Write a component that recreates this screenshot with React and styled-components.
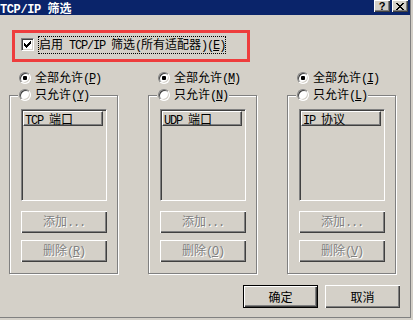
import React from 'react'
import styled, { createGlobalStyle } from 'styled-components'

const GlobalStyle = createGlobalStyle`
  html, body {
    margin: 0;
    padding: 0;
    background: #d4d0c8;
  }
  body {
    width: 413px;
    height: 320px;
    overflow: hidden;
    font-family: "Noto Sans CJK SC", "Liberation Sans", sans-serif;
    font-size: 12px;
    color: #000;
  }
`

const Window = styled.div`
  width: 410px;
  height: 317px;
  border-right: 1px solid #808080;
  border-bottom: 1px solid #808080;
  display: flex;
  flex-direction: column;
`

const TitleBar = styled.div`
  height: 15px;
  flex: none;
  background: #0a246a;
  color: #fff;
  display: flex;
  justify-content: space-between;
  align-items: flex-start;
  padding-right: 2px;
`

const TitleText = styled.div`
  font-weight: bold;
  line-height: 13px;
  padding-top: 1px;
  white-space: pre;
`

const TitleAscii = styled.span`
  font-family: "Liberation Mono", monospace;
  font-size: 12px;
  font-weight: bold;
  letter-spacing: -0.4px;
`

const Caption = styled.div`
  display: flex;
  gap: 2px;
`

const CapButton = styled.div`
  width: 16px;
  height: 12px;
  background: #d4d0c8;
  box-shadow: inset 1px 1px #fff, inset -1px -1px #404040, inset -2px -2px #808080;
  display: flex;
  align-items: center;
  justify-content: center;
  color: #000;
  font-family: "Liberation Sans", sans-serif;
  font-weight: bold;
  font-size: 11px;
  line-height: 12px;
`

const Body = styled.div`
  flex: 1;
  display: flex;
  flex-direction: column;
  padding: 15px 10px 0 9px;
`

const Highlight = styled.div`
  box-sizing: border-box;
  width: 238px;
  height: 32px;
  margin-left: 3px;
  border: 3px solid #ee3d3d;
  display: flex;
  align-items: center;
  padding: 0 0 3px 6px;
`

const CheckBox = styled.span`
  box-sizing: border-box;
  width: 13px;
  height: 13px;
  flex: none;
  background: #fff;
  border: 1px solid;
  border-color: #808080 #fff #fff #808080;
  box-shadow: inset 1px 1px #404040, inset -1px -1px #d4d0c8;
  padding: 2px 0 0 2px;
  display: flex;
`

const FocusLabel = styled.span`
  margin-left: 4px;
  border: 1px dotted #000;
  line-height: 13px;
  white-space: pre;
`

const Ascii = styled.span`
  font-family: "Liberation Mono", monospace;
  font-size: 12px;
  letter-spacing: -1.2px;
`

const Columns = styled.div`
  display: flex;
  gap: 29px;
  margin-top: 9px;
`

const Column = styled.div`
  width: 110px;
  display: flex;
  flex-direction: column;
`

const RadioRow = styled.div`
  height: 14px;
  display: flex;
  align-items: center;
  gap: 4px;
  padding-left: 10px;
  line-height: 14px;
  white-space: pre;
`

const Radio = styled.span`
  box-sizing: border-box;
  width: 12px;
  height: 12px;
  flex: none;
  border-radius: 50%;
  background: #fff;
  border: 1px solid;
  border-color: #808080 #fff #fff #808080;
  box-shadow: inset 1px 1px #404040, inset -1px -1px #d4d0c8;
  display: flex;
  align-items: center;
  justify-content: center;

  &::after {
    content: '';
    width: 4px;
    height: 4px;
    border-radius: 1px;
    background: ${p => (p.$checked ? '#000' : 'transparent')};
  }
`

const Group = styled.fieldset`
  box-sizing: border-box;
  width: 109px;
  min-width: 0;
  margin: 3px 0 0;
  padding: 7px 11px 11px;
  border: 1px solid #808080;
  box-shadow: inset 1px 1px #fff, 1px 1px #fff;
`

const Legend = styled.legend`
  display: flex;
  align-items: center;
  gap: 4px;
  height: 14px;
  line-height: 14px;
  padding: 0 1px;
  margin-left: -3px;
  background: #d4d0c8;
  white-space: pre;
`

const List = styled.div`
  box-sizing: border-box;
  width: 86px;
  height: 92px;
  padding: 1px;
  border: 1px solid;
  border-color: #808080 #fff #fff #808080;
  box-shadow: inset 1px 1px #404040, inset -1px -1px #d4d0c8;
`

const ListHeader = styled.div`
  box-sizing: border-box;
  width: 80px;
  height: 15px;
  border: 1px solid;
  border-color: #fff #404040 #404040 #fff;
  box-shadow: inset -1px -1px #808080;
  padding-left: 1px;
  line-height: 13px;
  white-space: pre;
`

const Button = styled.button`
  box-sizing: border-box;
  width: ${p => p.$w || 86}px;
  height: ${p => p.$h || 22}px;
  margin: 0;
  margin-top: ${p => p.$mt || 0}px;
  padding: 0;
  background: #d4d0c8;
  border: ${p => (p.$default ? '1px solid #000' : 'none')};
  box-shadow: inset 1px 1px #fff, inset -1px -1px #404040, inset -2px -2px #808080;
  font-family: "Noto Sans CJK SC", "Liberation Sans", sans-serif;
  font-size: 12px;
  line-height: 14px;
  white-space: pre;
  color: #000;

  &:disabled {
    color: #808080;
    text-shadow: 1px 1px #fff;
  }
`

const Footer = styled.div`
  display: flex;
  justify-content: flex-end;
  gap: 7px;
  margin-top: 11px;
`

const isAscii = s => /^[\x20-\x7e]+$/.test(s)

const Txt = ({ text }) =>
  text
    .split(/([\x20-\x7e]+)/)
    .filter(Boolean)
    .map((part, i) =>
      isAscii(part) ? <Ascii key={i}>{part}</Ascii> : <React.Fragment key={i}>{part}</React.Fragment>
    )

const Label = ({ text, hot }) => (
  <span>
    <Txt text={text} />
    {hot && (
      <Ascii>
        (<u>{hot}</u>)
      </Ascii>
    )}
  </span>
)

const CheckMark = () => (
  <svg width="7" height="7" viewBox="0 0 7 7" shapeRendering="crispEdges">
    {[2, 3, 4, 3, 2, 1, 0].map((y, x) => (
      <rect key={x} x={x} y={y} width="1" height="3" fill="#000" />
    ))}
  </svg>
)

const CloseGlyph = () => {
  const rows = [[0, 6], [1, 5], [2, 4], [3, 3], [2, 4], [1, 5], [0, 6]]
  return (
    <svg width="8" height="7" viewBox="0 0 8 7" shapeRendering="crispEdges">
      {rows.map(([a, b], y) => (
        <React.Fragment key={y}>
          <rect x={a} y={y} width="2" height="1" fill="#000" />
          {b !== a && <rect x={b} y={y} width="2" height="1" fill="#000" />}
        </React.Fragment>
      ))}
    </svg>
  )
}

const columns = [
  { all: 'P', only: 'Y', header: 'TCP 端口', del: 'R' },
  { all: 'M', only: 'N', header: 'UDP 端口', del: 'O' },
  { all: 'I', only: 'L', header: 'IP 协议', del: 'V' },
]

const App = () => (
  <>
    <GlobalStyle />
    <Window>
      <TitleBar>
        <TitleText>
          <TitleAscii>TCP/IP </TitleAscii>筛选
        </TitleText>
        <Caption>
          <CapButton>?</CapButton>
          <CapButton>
            <CloseGlyph />
          </CapButton>
        </Caption>
      </TitleBar>
      <Body>
        <Highlight>
          <CheckBox>
            <CheckMark />
          </CheckBox>
          <FocusLabel>
            <Label text="启用 TCP/IP 筛选(所有适配器)" hot="E" />
          </FocusLabel>
        </Highlight>
        <Columns>
          {columns.map(col => (
            <Column key={col.header}>
              <RadioRow>
                <Radio $checked />
                <Label text="全部允许" hot={col.all} />
              </RadioRow>
              <Group>
                <Legend>
                  <Radio />
                  <Label text="只允许" hot={col.only} />
                </Legend>
                <List>
                  <ListHeader>
                    <Label text={col.header} />
                  </ListHeader>
                </List>
                <Button disabled $mt={10}>
                  <Label text="添加..." />
                </Button>
                <Button disabled $mt={7}>
                  <Label text="删除" hot={col.del} />
                </Button>
              </Group>
            </Column>
          ))}
        </Columns>
        <Footer>
          <Button $default $w={75} $h={23}>
            确定
          </Button>
          <Button $w={75} $h={23}>
            取消
          </Button>
        </Footer>
      </Body>
    </Window>
  </>
)

export default App
